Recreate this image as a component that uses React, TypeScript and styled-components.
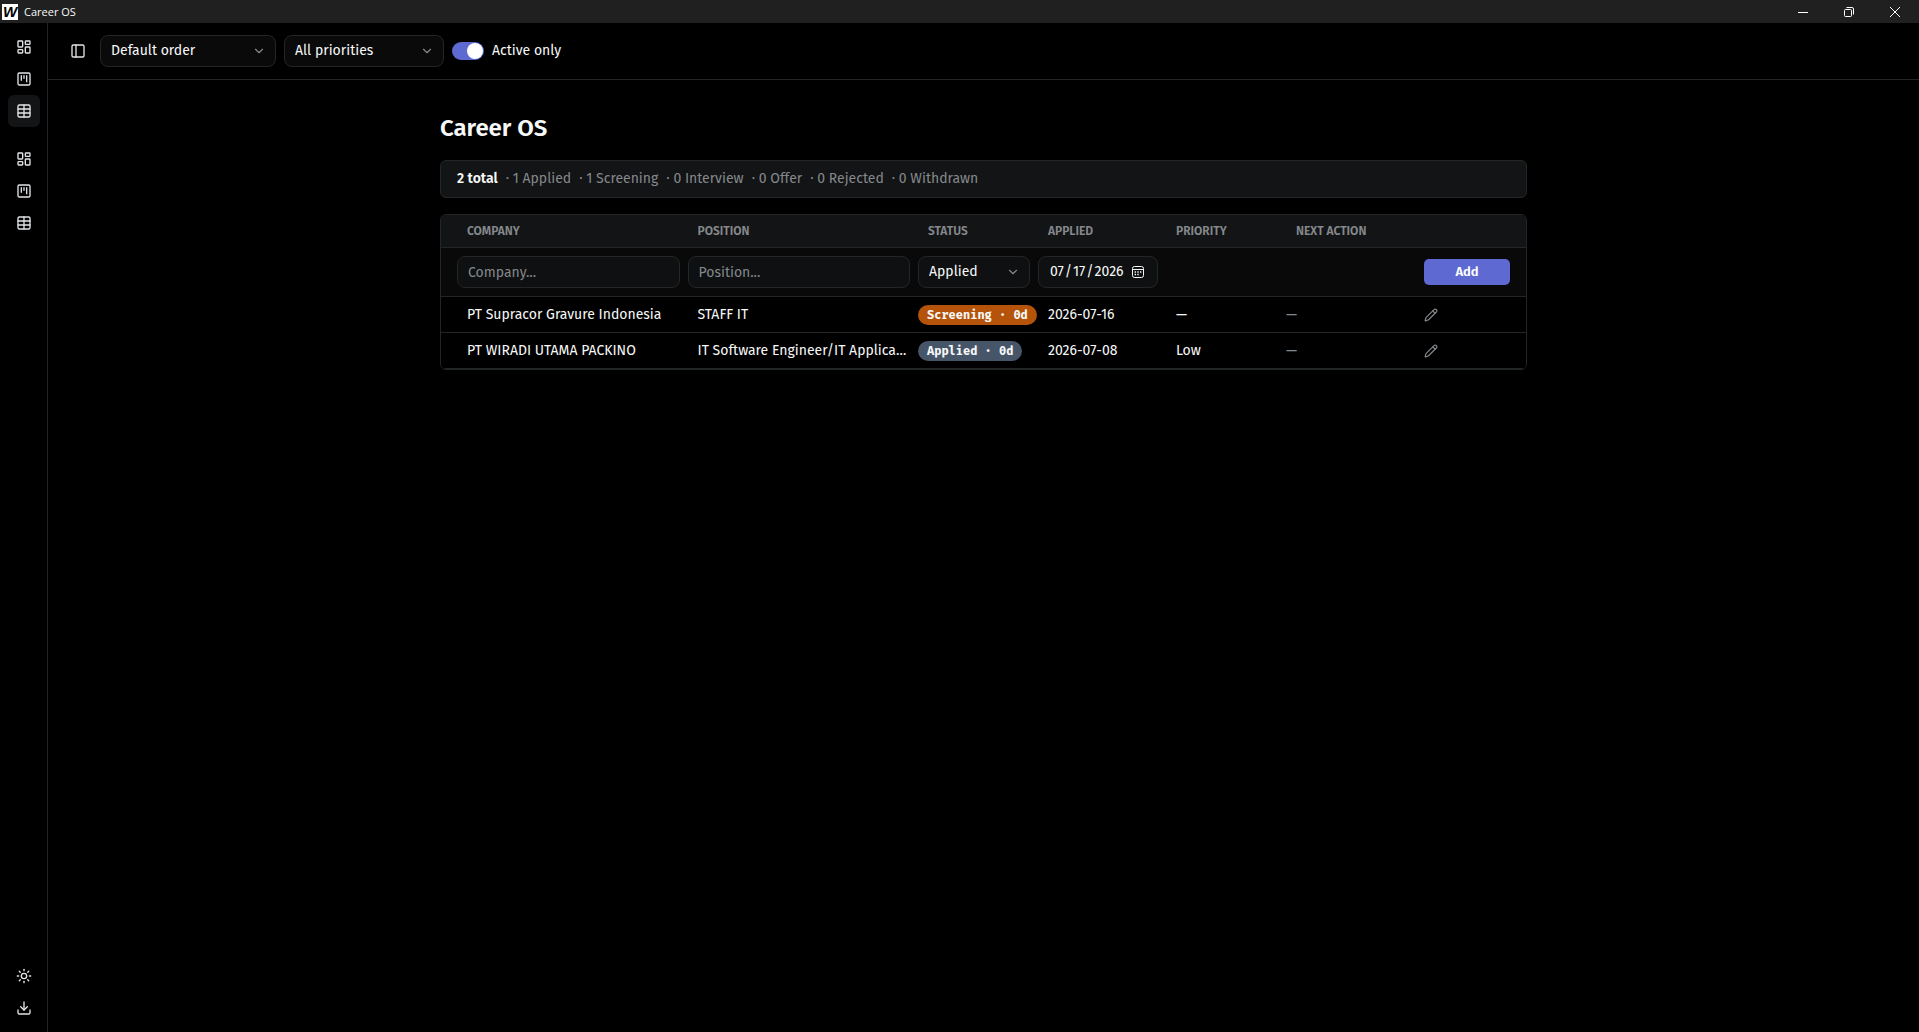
import React, { useState } from "react";
import styled, { createGlobalStyle } from "styled-components";
import {
  LayoutDashboard,
  SquareKanban,
  Table as TableIcon,
  PanelLeft,
  ChevronDown,
  Sun,
  Download,
  Pencil,
} from "lucide-react";

const c = {
  bg: "#000000",
  chrome: "#202020",
  panel: "#121415",
  field: "#0e1011",
  select: "#0a0a0b",
  row: "#090909",
  border: "#232627",
  text: "#f7f8f8",
  muted: "#85888c",
  icon: "#e2e4e6",
  accent: "#5e6ad2",
};

const sans = `"Fira Sans", "Noto Sans", "Open Sans", sans-serif`;
const mono = `"Fira Mono", "DejaVu Sans Mono", monospace`;

const GlobalStyle = createGlobalStyle`
  *, *::before, *::after { box-sizing: border-box; }
  body {
    margin: 0;
    background: ${c.bg};
    color: ${c.text};
    font-family: ${sans};
    font-size: 14px;
    line-height: 20px;
    color-scheme: dark;
  }
  button, input, select { font: inherit; color: inherit; }
`;

const Window = styled.div`
  display: flex;
  flex-direction: column;
  min-height: 100vh;
`;

const TitleBar = styled.header`
  display: flex;
  align-items: center;
  height: 23px;
  padding: 0 1px 0 2px;
  background: ${c.chrome};
`;

const LogoMark = styled.span`
  width: 16px;
  height: 16px;
  overflow: hidden;
  background: #fff;
  color: #000;
  font-family: "Liberation Sans", sans-serif;
  font-size: 15px;
  font-style: italic;
  font-weight: 700;
  line-height: 16px;
  text-align: center;
`;

const AppName = styled.span`
  flex: 1;
  padding-left: 6px;
  font-family: "Open Sans", "Noto Sans", sans-serif;
  font-size: 11px;
  line-height: 16px;
`;

const WindowButton = styled.button`
  display: grid;
  place-items: center;
  width: 46px;
  height: 23px;
  padding: 0;
  border: 0;
  background: none;
`;

const Body = styled.div`
  display: flex;
  flex: 1;
`;

const Rail = styled.nav`
  display: flex;
  flex-direction: column;
  justify-content: space-between;
  width: 48px;
  padding: 8px 7px 8px 8px;
  border-right: 1px solid ${c.border};
`;

const RailGroups = styled.div`
  display: grid;
  gap: 16px;
`;

const RailGroup = styled.div`
  display: grid;
`;

const IconButton = styled.button<{ $active?: boolean; $size?: number }>`
  display: grid;
  place-items: center;
  width: ${(p) => p.$size ?? 32}px;
  height: ${(p) => p.$size ?? 32}px;
  padding: 0;
  border: 0;
  border-radius: 6px;
  background: ${(p) => (p.$active ? c.panel : "none")};
  color: ${c.icon};
`;

const Main = styled.main`
  flex: 1;
  min-width: 0;
`;

const Toolbar = styled.div`
  display: flex;
  align-items: center;
  gap: 8px;
  height: 57px;
  padding: 0 16px;
  border-bottom: 1px solid ${c.border};
`;

const ControlBox = styled.div<{ $width?: number }>`
  display: grid;
  grid-template-columns: minmax(0, 1fr);
  align-items: center;
  width: ${(p) => (p.$width ? `${p.$width}px` : "100%")};
  & > * { grid-area: 1 / 1; }
  & > svg {
    justify-self: end;
    margin-right: 10px;
    color: ${c.muted};
    pointer-events: none;
  }
`;

const Select = styled.select<{ $bg?: string }>`
  appearance: none;
  width: 100%;
  height: 32px;
  padding: 0 28px 1px 10px;
  border: 1px solid ${c.border};
  border-radius: 8px;
  background: ${(p) => p.$bg ?? c.select};
`;

const SwitchLabel = styled.label`
  display: flex;
  align-items: center;
  gap: 8px;
`;

const Switch = styled.input`
  appearance: none;
  display: flex;
  justify-content: flex-end;
  width: 32px;
  height: 18px;
  margin: 0;
  padding: 1px;
  border-radius: 9px;
  background: ${c.accent};
  &::before {
    content: "";
    width: 16px;
    height: 16px;
    border-radius: 8px;
    background: #fff;
  }
  &:not(:checked) {
    justify-content: flex-start;
    background: ${c.border};
  }
`;

const Content = styled.div`
  max-width: 1151px;
  margin: 0 auto;
  padding: 32px;
`;

const Title = styled.h1`
  margin: 0 0 16px;
  font-size: 24px;
  line-height: 32px;
  font-weight: 600;
`;

const Summary = styled.section`
  display: flex;
  flex-wrap: wrap;
  gap: 8px;
  margin-bottom: 16px;
  padding: 9px 16px;
  border: 1px solid ${c.border};
  border-radius: 6px;
  background: ${c.panel};
  color: ${c.muted};
  line-height: 18px;
  strong { color: ${c.text}; font-weight: 600; }
`;

const Card = styled.div`
  overflow: hidden;
  border: 1px solid ${c.border};
  border-radius: 6px;
`;

const Table = styled.table`
  display: block;
`;
const Head = styled.thead`
  display: block;
`;
const Rows = styled.tbody`
  display: block;
`;

const Row = styled.tr<{ $kind?: "head" | "form" }>`
  display: grid;
  grid-template-columns: 89fr 89fr 112px 120px 112px 52fr 86px;
  align-items: center;
  gap: 8px;
  height: ${(p) => (p.$kind === "head" ? 33 : p.$kind === "form" ? 49 : 36)}px;
  padding: 0 16px;
  border-bottom: 1px solid ${c.border};
  background: ${(p) => (p.$kind === "head" ? c.panel : p.$kind === "form" ? c.row : c.bg)};
`;

const HeadCell = styled.th`
  padding: 0 10px;
  color: ${c.muted};
  font-size: 12px;
  line-height: 16px;
  font-weight: 600;
  text-align: left;
  text-transform: uppercase;
  white-space: nowrap;
`;

const Cell = styled.td<{ $flush?: boolean; $muted?: boolean }>`
  min-width: 0;
  padding: ${(p) => (p.$flush ? "0" : "0 0 0 10px")};
  overflow: ${(p) => (p.$flush ? "visible" : "hidden")};
  color: ${(p) => (p.$muted ? c.muted : c.text)};
  text-overflow: ellipsis;
  white-space: nowrap;
`;

const Field = styled.input`
  display: block;
  width: 100%;
  height: 32px;
  padding: 0 10px;
  border: 1px solid ${c.border};
  border-radius: 8px;
  background: ${c.field};
  &::placeholder { color: ${c.muted}; opacity: 1; }
`;

const DateBox = styled(ControlBox)`
  & > svg { margin-right: 13px; color: ${c.text}; }
`;

const DateField = styled(Field)`
  padding-bottom: 1px;
  &::-webkit-calendar-picker-indicator {
    width: 14px;
    margin: 0;
    padding: 0;
    opacity: 0;
  }
`;

const AddButton = styled.button`
  display: block;
  width: 100%;
  height: 26px;
  padding: 0;
  border: 0;
  border-radius: 5px;
  background: ${c.accent};
  color: #fff;
  font-size: 13px;
  font-weight: 600;
`;

const Pill = styled.span<{ $color: string }>`
  display: inline-block;
  height: 20px;
  padding: 0 9px;
  border-radius: 10px;
  background: ${(p) => p.$color};
  font-family: ${mono};
  font-size: 12px;
  line-height: 20px;
  font-weight: 700;
  vertical-align: middle;
`;

const EditButton = styled.button`
  display: block;
  padding: 0;
  border: 0;
  background: none;
  color: ${c.muted};
  svg { display: block; }
`;

const CalendarIcon = () => (
  <svg width="14" height="14" viewBox="0 0 14 14" fill="none" stroke="currentColor" aria-hidden="true">
    <rect x="1.5" y="1.5" width="11" height="11" rx="2" />
    <path d="M1.500 4.500h11" />
    <path d="M6.300 7h1.400M9 7h1.400M3.600 9.500h1.400M6.300 9.500h1.400M3.600 7h1.400" strokeWidth="1.400" />
  </svg>
);

const views = [
  { label: "Dashboard", Icon: LayoutDashboard },
  { label: "Board", Icon: SquareKanban },
  { label: "Table", Icon: TableIcon },
];

const counts = ["1 Applied", "1 Screening", "0 Interview", "0 Offer", "0 Rejected", "0 Withdrawn"];

const jobs = [
  {
    company: "PT Supracor Gravure Indonesia",
    position: "STAFF IT",
    status: "Screening",
    color: "#b45309",
    applied: "2026-07-16",
    priority: "—",
  },
  {
    company: "PT WIRADI UTAMA PACKINO",
    position: "IT Software Engineer/IT Application",
    status: "Applied",
    color: "#475569",
    applied: "2026-07-08",
    priority: "Low",
  },
];

export default function App() {
  const [activeOnly, setActiveOnly] = useState(true);
  return (
    <>
      <GlobalStyle />
      <Window>
        <TitleBar>
          <LogoMark aria-hidden="true">W</LogoMark>
          <AppName>Career OS</AppName>
          <WindowButton aria-label="Minimize">
            <svg width="10" height="10" stroke="#fff" fill="none"><path d="M0 5.500h10" /></svg>
          </WindowButton>
          <WindowButton aria-label="Restore">
            <svg width="10" height="10" stroke="#fff" fill="none">
              <rect x=".5" y="2.500" width="7" height="7" rx="1" />
              <path d="M2.500.5H8Q9.500.5 9.500 2v5.500" />
            </svg>
          </WindowButton>
          <WindowButton aria-label="Close">
            <svg width="10" height="10" stroke="#fff" fill="none"><path d="m0 0 10 10M10 0 0 10" /></svg>
          </WindowButton>
        </TitleBar>
        <Body>
          <Rail>
            <RailGroups>
              {[0, 1].map((group) => (
                <RailGroup key={group}>
                  {views.map(({ label, Icon }, i) => (
                    <IconButton key={label} aria-label={label} $active={group === 0 && i === 2}>
                      <Icon size={16} />
                    </IconButton>
                  ))}
                </RailGroup>
              ))}
            </RailGroups>
            <RailGroup>
              <IconButton aria-label="Toggle theme"><Sun size={16} /></IconButton>
              <IconButton aria-label="Export"><Download size={16} /></IconButton>
            </RailGroup>
          </Rail>
          <Main>
            <Toolbar>
              <IconButton $size={28} aria-label="Toggle sidebar"><PanelLeft size={16} /></IconButton>
              <ControlBox $width={176}>
                <Select aria-label="Sort order"><option>Default order</option></Select>
                <ChevronDown size={14} />
              </ControlBox>
              <ControlBox $width={160}>
                <Select aria-label="Priority filter"><option>All priorities</option></Select>
                <ChevronDown size={14} />
              </ControlBox>
              <SwitchLabel>
                <Switch
                  type="checkbox"
                  role="switch"
                  checked={activeOnly}
                  onChange={(e) => setActiveOnly(e.target.checked)}
                />
                Active only
              </SwitchLabel>
            </Toolbar>
            <Content>
              <Title>Career OS</Title>
              <Summary>
                <strong>2 total</strong>
                {counts.map((text) => <span key={text}>· {text}</span>)}
              </Summary>
              <Card>
                <Table>
                  <Head>
                    <Row $kind="head">
                      {["Company", "Position", "Status", "Applied", "Priority", "Next action"].map((h) => (
                        <HeadCell key={h} scope="col">{h}</HeadCell>
                      ))}
                    </Row>
                  </Head>
                  <Rows>
                    <Row $kind="form">
                      <Cell $flush><Field aria-label="Company" placeholder="Company..." /></Cell>
                      <Cell $flush><Field aria-label="Position" placeholder="Position..." /></Cell>
                      <Cell $flush>
                        <ControlBox>
                          <Select $bg={c.field} aria-label="Status"><option>Applied</option></Select>
                          <ChevronDown size={14} />
                        </ControlBox>
                      </Cell>
                      <Cell $flush>
                        <DateBox>
                          <DateField type="date" aria-label="Applied on" defaultValue="2026-07-17" />
                          <CalendarIcon />
                        </DateBox>
                      </Cell>
                      <Cell $flush />
                      <Cell $flush />
                      <Cell $flush><AddButton>Add</AddButton></Cell>
                    </Row>
                    {jobs.map((job) => (
                      <Row key={job.company}>
                        <Cell>{job.company}</Cell>
                        <Cell>{job.position}</Cell>
                        <Cell $flush><Pill $color={job.color}>{job.status} · 0d</Pill></Cell>
                        <Cell>{job.applied}</Cell>
                        <Cell>{job.priority}</Cell>
                        <Cell $flush $muted>—</Cell>
                        <Cell $flush>
                          <EditButton aria-label={`Edit ${job.company}`}><Pencil size={14} /></EditButton>
                        </Cell>
                      </Row>
                    ))}
                  </Rows>
                </Table>
              </Card>
            </Content>
          </Main>
        </Body>
      </Window>
    </>
  );
}
